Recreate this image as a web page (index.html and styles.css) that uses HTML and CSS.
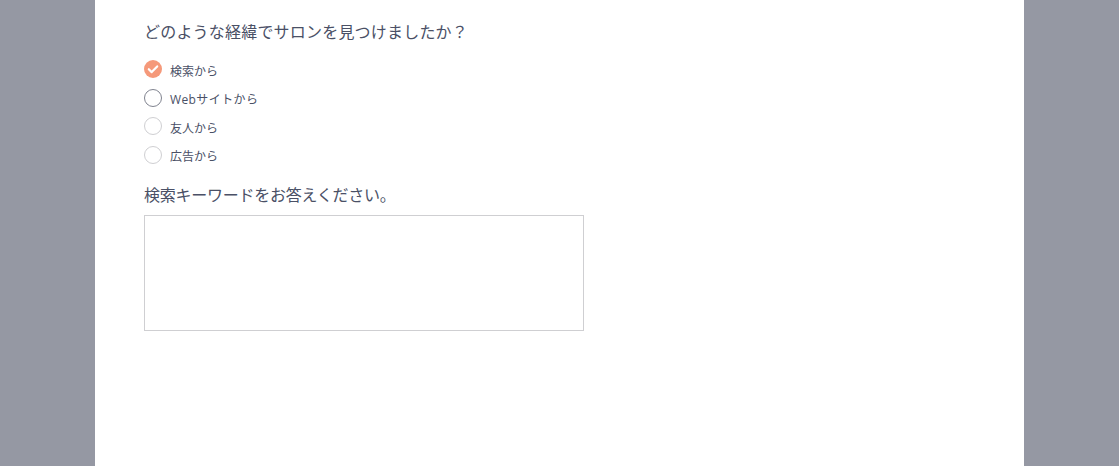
FILE: index.html
```html
<!DOCTYPE html>
<html lang="ja">
  <head>
    <meta charset="UTF-8" />
    <meta name="viewport" content="width=device-width, initial-scale=1.0" />
    <title>アンケート</title>
    <link rel="stylesheet" href="styles.css">
  </head>
  <body>
    <div class="sheet">
      <p class="question">どのような経緯でサロンを見つけましたか？</p>
      <ul class="options">
        <li class="option">
          <span class="mark mark-checked">
            <svg width="18" height="18" viewBox="0 0 18 18">
              <path d="M4.8 9.2 L7.7 12.1 L13.2 6.4" fill="none" stroke="#fff" stroke-width="2.2" stroke-linecap="round" stroke-linejoin="round" />
            </svg>
          </span>
          <span class="option-text">検索から</span>
        </li>
        <li class="option">
          <span class="mark mark-hover"></span>
          <span class="option-text option-text-wide">Webサイトから</span>
        </li>
        <li class="option">
          <span class="mark"></span>
          <span class="option-text">友人から</span>
        </li>
        <li class="option">
          <span class="mark"></span>
          <span class="option-text">広告から</span>
        </li>
      </ul>
      <label class="keyword-label" for="keyword">検索キーワードをお答えください。</label>
      <textarea class="keyword" id="keyword"></textarea>
    </div>
  </body>
</html>
```

FILE: styles.css
```css
* {
  box-sizing: border-box;
  margin: 0;
  padding: 0;
  font-family: "Open Sans", "Noto Sans CJK JP", sans-serif;
}

html,
body {
  height: 100%;
  overflow: hidden;
}

body {
  background-color: #9598a3;
  color: #4a5066;
}

.sheet {
  width: 929px;
  height: 100%;
  margin-left: 95px;
  padding: 20px 49px 0;
  background: white;
}

.question {
  font-size: 16px;
  line-height: 24px;
  letter-spacing: 0.2px;
  margin-bottom: 11px;
}

.options {
  list-style: none;
}

.option {
  display: flex;
  align-items: center;
  gap: 8px;
  height: 28.5px;
}

.mark {
  width: 18px;
  height: 18px;
  border: 1px solid #cfcfd2;
  border-radius: 50%;
  flex-shrink: 0;
}

.mark-checked {
  border: none;
  background-color: #f5997a;
}

.mark-checked svg {
  display: block;
}

.mark-hover {
  border-color: #80838f;
}

.option-text {
  font-size: 12px;
  line-height: 18px;
  padding-top: 5px;
}

.option-text-wide {
  letter-spacing: 0.4px;
}

.keyword-label {
  display: block;
  font-size: 16px;
  line-height: 24px;
  letter-spacing: -0.25px;
  margin-top: 14px;
  margin-bottom: 8px;
}

.keyword {
  display: block;
  width: 440px;
  height: 116px;
  border: 1px solid #cfcfd2;
  resize: none;
  background: white;
}
```
